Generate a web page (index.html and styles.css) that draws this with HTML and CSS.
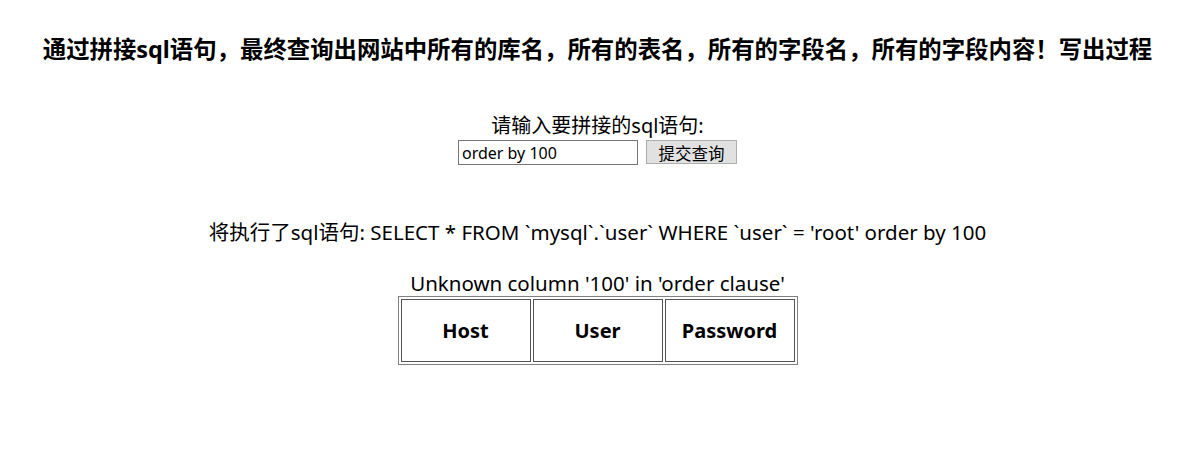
FILE: index.html
```html
<!DOCTYPE html>
<html lang="zh">
<head>
<meta charset="utf-8">
<title>SQL</title>
<link rel="stylesheet" href="styles.css">
</head>
<body>
<h2 class="title">通过拼接sql语句，最终查询出网站中所有的库名，所有的表名，所有的字段名，所有的字段内容！写出过程</h2>
<form class="query">
  <div class="label">请输入要拼接的sql语句:</div>
  <div class="controls">
    <input class="field" type="text" value="order by 100">
    <button class="submit" type="button">提交查询</button>
  </div>
</form>
<p class="statement">将执行了sql语句: SELECT * FROM `mysql`.`user` WHERE `user` = 'root' order by 100</p>
<p class="error">Unknown column '100' in 'order clause'</p>
<table class="result">
  <tr><th>Host</th><th>User</th><th>Password</th></tr>
</table>
</body>
</html>
```
FILE: styles.css
```css
html, body {
  margin: 0;
  padding: 0;
  background: #fff;
}
body {
  padding-left: 11px;
  font-family: "Noto Sans", "Noto Sans CJK SC", sans-serif;
  color: #000;
  text-align: center;
  font-size: 20.5px;
}
.title {
  margin: 34px 0 0;
  font-size: 23.4px;
  line-height: 30px;
  font-weight: bold;
}
.query {
  margin: 50px 0 0;
}
.label {
  font-size: 20px;
  line-height: 24px;
}
.controls {
  display: flex;
  justify-content: center;
  gap: 8px;
  height: 25px;
  margin-top: 2px;
}
.field {
  box-sizing: border-box;
  width: 180px;
  height: 25px;
  margin: 0;
  padding: 1px 3px;
  border: 1px solid #767676;
  font-family: inherit;
  font-size: 16px;
  color: #000;
}
.submit {
  box-sizing: border-box;
  width: 91px;
  height: 24px;
  margin: 0;
  padding: 0;
  border: 1px solid #adadad;
  background: #e1e1e1;
  font-family: inherit;
  font-size: 16.5px;
  color: #000;
}
.statement {
  margin: 55px 0 0;
  line-height: 24px;
}
.error {
  margin: 27px 0 0;
  line-height: 24px;
}
.result {
  margin: 1px auto 0;
  border: 1px solid #808080;
  border-spacing: 2px;
}
.result th {
  width: 128px;
  height: 61px;
  padding: 0;
  border: 1px solid #555;
  font-size: 20px;
  font-weight: bold;
}
```
